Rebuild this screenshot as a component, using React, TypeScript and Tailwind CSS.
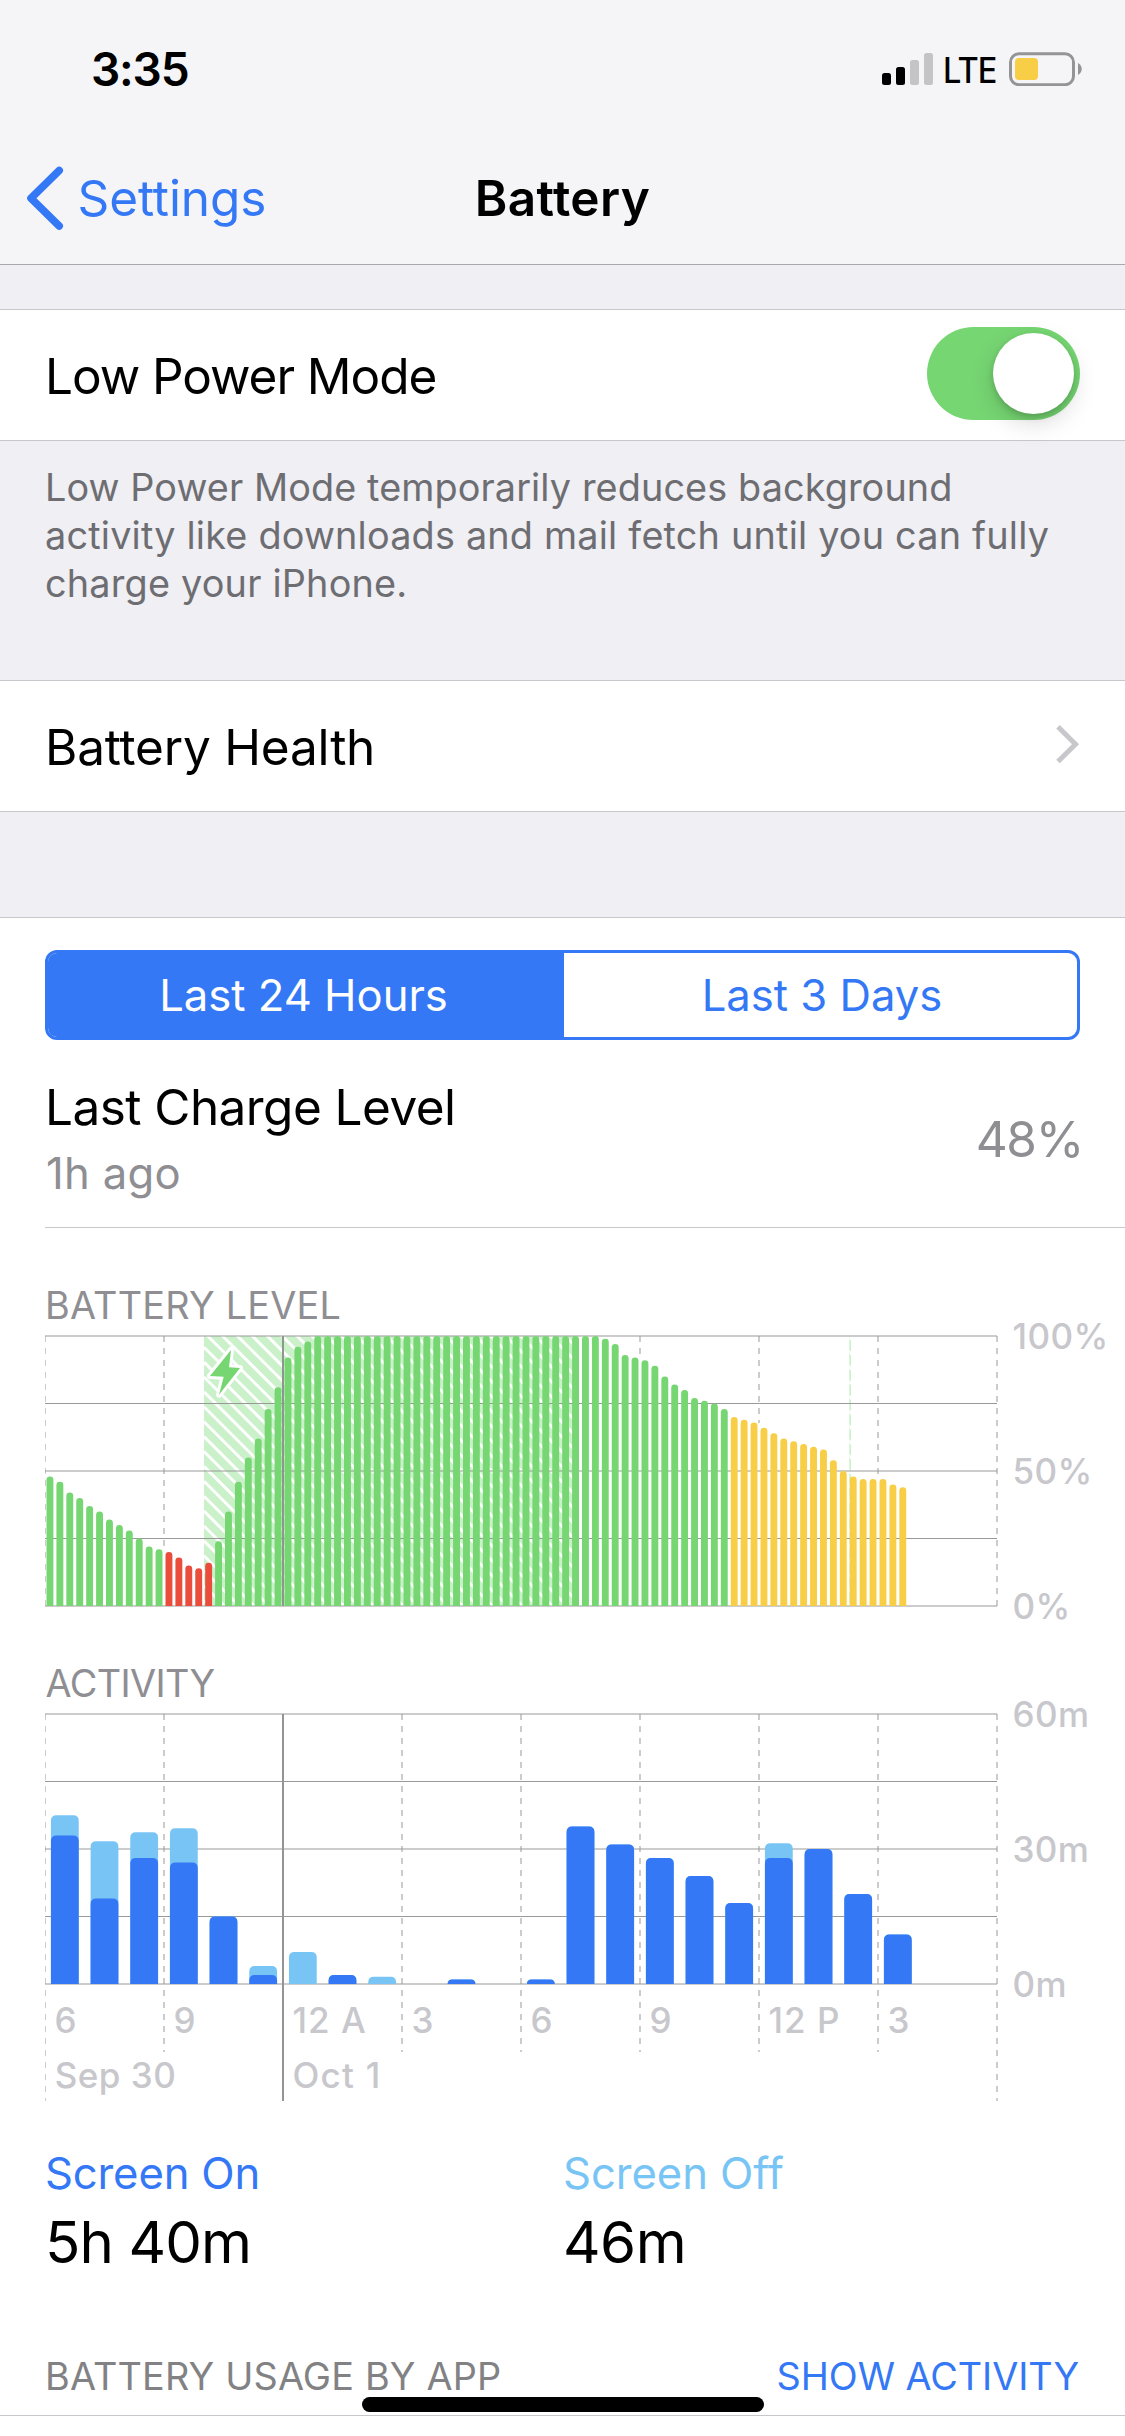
import React, { useState } from 'react';

type Tab = 'day' | 'days';
type ActivityHour = { on: number; total: number };

// battery percent, one sample every 15 minutes
const levels = [
  48, 46, 42, 40, 37, 35, 32, 30, 28, 25, 22, 21,
  20, 18, 15, 14, 16,
  24, 35, 46, 55, 62, 73, 81, 92, 96, 98,
  ...Array(29).fill(100),
  99, 97, 93, 92, 91, 89, 85, 82, 80, 77, 76, 75, 73,
  70, 69, 68, 66, 64, 62, 61, 60, 59, 58, 54, 50, 48, 47, 47, 47, 45, 44,
];

// minutes per hour
const activity: ActivityHour[] = [
  { on: 33, total: 37.5 },
  { on: 19, total: 31.7 },
  { on: 28, total: 33.7 },
  { on: 27, total: 34.6 },
  { on: 15, total: 15 },
  { on: 2, total: 4 },
  { on: 0, total: 7.1 },
  { on: 2, total: 2 },
  { on: 0, total: 1.6 },
  { on: 0, total: 0 },
  { on: 1, total: 1 },
  { on: 0, total: 0 },
  { on: 1, total: 1 },
  { on: 35, total: 35 },
  { on: 31, total: 31 },
  { on: 28, total: 28 },
  { on: 24, total: 24 },
  { on: 18, total: 18 },
  { on: 28, total: 31.3 },
  { on: 30, total: 30 },
  { on: 20, total: 20 },
  { on: 11, total: 11 },
];

const hours = ['6', '9', '12 A', '3', '6', '9', '12 P', '3'];

const LEFT = 45;
const RIGHT = 997;
const TOP = 28;
const BOTTOM = 298;
const STEP = 119;

const levelColor = (i: number) => {
  if (i >= 12 && i <= 16) return '#eb4d3d';
  if (i >= 69) return '#f8ce46';
  return '#76d672';
};

const barPath = (cx: number, width: number, height: number, radius: number) => {
  const r = Math.min(radius, height);
  const x = cx - width / 2;
  const y = BOTTOM - height;
  return `M${x} ${BOTTOM}V${y + r}Q${x} ${y} ${x + r} ${y}H${x + width - r}Q${x + width} ${y} ${x + width} ${y + r}V${BOTTOM}Z`;
};

const GridRows: React.FC = () => (
  <g stroke="#999999">
    {[0, 1, 2, 3, 4].map(n => (
      <line key={n} x1={LEFT} x2={RIGHT} y1={TOP + n * 67.5} y2={TOP + n * 67.5} />
    ))}
  </g>
);

const ScaleLabels: React.FC<{ labels: string[] }> = ({ labels }) => (
  <g className="fill-[#c7c7cc] text-[35px] font-medium tracking-[0.4px]">
    {labels.map((label, n) => (
      <text key={label} x={1012.5} y={TOP + 12.6 + n * 135}>{label}</text>
    ))}
  </g>
);

const BatteryLevelChart: React.FC = () => {
  // dashed lines stop where the bars begin
  const dashes = [
    [0, BOTTOM], [1, 238], [5, 46], [6, 115], [7, 166], [8, BOTTOM],
  ];

  return (
    <svg width="1125" height="352" viewBox="0 0 1125 352" className="-mt-5 block">
      <defs>
        <clipPath id="charging">
          <rect x="204" y={TOP} width="371" height="270" />
          <rect x="849.3" y={TOP} width="1.7" height="270" />
        </clipPath>
        <clipPath id="level-plot">
          <rect x={LEFT} y="0" width="960" height="352" />
        </clipPath>
      </defs>
      <g clipPath="url(#charging)">
        <rect x="204" y={TOP} width="700" height="270" fill="#cbf1cb" />
        {Array.from({ length: 68 }, (_, n) => {
          const y = 39.2 + (n - 48) * 14.9;
          return <line key={n} x1="204" y1={y} x2="904" y2={y + 700} stroke="#fff" strokeWidth="2.9" />;
        })}
      </g>
      <GridRows />
      <g stroke="#999999" strokeDasharray="6 6" clipPath="url(#level-plot)">
        {dashes.map(([n, end]) => (
          <line key={n} x1={LEFT + n * STEP} x2={LEFT + n * STEP} y1={TOP} y2={end} />
        ))}
      </g>
      <line x1="283" x2="283" y1={TOP} y2={BOTTOM} stroke="#8f9590" strokeWidth="2" />
      {levels.map((level, i) => (
        <path key={i} d={barPath(LEFT + (i + 0.5) * (952 / 96), 6.9, level * 2.7, 3.4)} fill={levelColor(i)} />
      ))}
      <path
        d="M231 42L229 59.3L240 60L219 86.7L223.7 68.7L210 68Z"
        fill="#76d672"
        stroke="#fff"
        strokeWidth="6"
        strokeLinejoin="round"
        paintOrder="stroke"
      />
      <ScaleLabels labels={['100%', '50%', '0%']} />
    </svg>
  );
};

const ActivityChart: React.FC = () => (
  <svg width="1125" height="420" viewBox="0 0 1125 420" className="-mt-5 block">
    <defs>
      <clipPath id="activity-plot">
        <rect x={LEFT} y="0" width="960" height="420" />
      </clipPath>
    </defs>
    <GridRows />
    <g stroke="#999999" strokeDasharray="6 6" clipPath="url(#activity-plot)">
      {[0, 1, 2, 3, 4, 5, 6, 7, 8].map(n => (
        <line
          key={n}
          x1={LEFT + n * STEP}
          x2={LEFT + n * STEP}
          y1={TOP}
          y2={n === 0 || n === 8 ? 415 : 366}
        />
      ))}
    </g>
    <line x1="283" x2="283" y1={TOP} y2="415" stroke="#949494" strokeWidth="2" />
    {activity.map(({ on, total }, i) => {
      const cx = LEFT + (i + 0.5) * (952 / 24);
      return (
        <g key={i}>
          {total > 0 && <path d={barPath(cx, 27.8, total * 4.5, 5.5)} fill="#78c5f5" />}
          {on > 0 && <path d={barPath(cx, 27.8, on * 4.5, 5.5)} fill="#3478f6" />}
        </g>
      );
    })}
    <ScaleLabels labels={['60m', '30m', '0m']} />
    <g className="fill-[#c7c7cc] text-[35px] font-medium tracking-[1px]">
      {hours.map((hour, n) => (
        <text key={n} x={LEFT + 9.5 + n * STEP} y="347">{hour}</text>
      ))}
      <text x="54.7" y="401.7" className="tracking-[0.5px]">Sep 30</text>
      <text x="292.4" y="401.7" className="tracking-[1.3px]">Oct 1</text>
    </g>
  </svg>
);

const StatusBar: React.FC = () => (
  <div className="flex h-[132px] items-start justify-between pl-[91px] pr-[43px] pt-10">
    <span className="pt-px text-[46px] leading-[56px] font-semibold tracking-[-1.17px]">3:35</span>
    <div className="flex items-start pt-3">
      <svg width="51" height="34" viewBox="0 0 51 34" className="mt-px">
        <rect x="0" y="20" width="9" height="12" rx="2.5" fill="#000" />
        <rect x="14" y="14" width="9" height="18" rx="2.5" fill="#000" />
        <rect x="28" y="7" width="9" height="25" rx="2.5" fill="#c4c4c6" />
        <rect x="42" y="0" width="9" height="32" rx="2.5" fill="#c4c4c6" />
      </svg>
      <span className="ml-[9.5px] w-[66.5px] origin-left scale-x-[0.93] text-[35px] leading-9 font-medium tracking-[-1px]">LTE</span>
      <svg width="73" height="34" viewBox="0 0 73 34">
        <rect x="1.5" y="1.7" width="63" height="31" rx="8.5" fill="none" stroke="#949496" strokeWidth="3" />
        <rect x="6" y="6" width="23" height="22" rx="4" fill="#f8ce46" />
        <path d="M69 11C74 14 74 20 69 23Z" fill="#949496" />
      </svg>
    </div>
  </div>
);

const NavBar: React.FC = () => (
  <div className="grid h-[132px] grid-cols-3 items-center text-[49.5px] leading-[60px]">
    <button className="flex items-center pl-6 text-[#3478f6]">
      <svg width="42" height="66" viewBox="0 0 42 66" fill="none">
        <path d="M35.2 5.5L7 33.3L35.2 61" stroke="#3478f6" strokeWidth="7.6" strokeLinecap="round" strokeLinejoin="round" />
      </svg>
      <span className="ml-[11.5px] tracking-[-0.1px]">Settings</span>
    </button>
    <h1 className="text-center font-semibold tracking-[0.4px]">Battery</h1>
  </div>
);

const App: React.FC = () => {
  const [lowPower, setLowPower] = useState(true);
  const [tab, setTab] = useState<Tab>('day');

  return (
    <div className="relative h-[2436px] w-[1125px] overflow-hidden bg-[#efeff4] font-[Inter,'Liberation_Sans',sans-serif] text-black">
      <header className="h-[265px] border-b border-[#a9a9ad] bg-[#f5f5f7]">
        <StatusBar />
        <NavBar />
      </header>

      <div className="mt-11 flex h-[132px] items-center justify-between border-y border-[#c8c7cc] bg-white px-[45px]">
        <span className="pt-0.5 text-[49.5px] leading-[60px] tracking-[-1.05px]">Low Power Mode</span>
        <button
          onClick={() => setLowPower(!lowPower)}
          className={`mb-[3px] flex h-[93px] w-[153px] items-center rounded-full px-1.5 ${lowPower ? 'justify-end bg-[#76d672]' : 'justify-start bg-[#e5e5ea]'}`}
        >
          <span className="size-[81px] rounded-full bg-white shadow-[0_9px_24px_rgba(0,0,0,0.15),0_3px_6px_rgba(0,0,0,0.16)]" />
        </button>
      </div>
      <p className="h-[239px] pl-[45px] pt-[22px] text-[37.8px] leading-[48px] tracking-[0.2px] text-[#6d6d72]">
        <span className="tracking-[0.1px]">Low Power Mode temporarily reduces background</span><br />
        activity like downloads and mail fetch until you can fully<br />
        charge your iPhone.
      </p>

      <div className="flex h-[132px] items-center justify-between border-y border-[#c8c7cc] bg-white px-[45px]">
        <span className="pt-0.5 text-[49.5px] leading-[60px] tracking-[-0.2px]">Battery Health</span>
        <svg width="24" height="40" viewBox="0 0 24 40" fill="none" className="mb-1">
          <path d="M2 2.8L19.5 20.2L2 37.6" stroke="#c7c7cc" strokeWidth="5" />
        </svg>
      </div>

      <section className="mt-[105px] h-[1498px] border-t border-[#c8c7cc] bg-white pt-8">
        <div className="mx-[45px] flex h-[90px] overflow-hidden rounded-[12px] border-[3px] border-[#3478f6] text-[43.6px] leading-[52px]">
          <button
            onClick={() => setTab('day')}
            className={`w-[516px] pr-[5px] pt-px ${tab === 'day' ? 'bg-[#3478f6] text-white' : 'text-[#3478f6]'}`}
          >
            Last 24 Hours
          </button>
          <button
            onClick={() => setTab('days')}
            className={`flex-1 pl-[3px] pt-px ${tab === 'days' ? 'bg-[#3478f6] text-white' : 'text-[#3478f6]'}`}
          >
            Last 3 Days
          </button>
        </div>

        <div className="ml-[45px] flex h-[188px] justify-between border-b border-[#c8c7cc] pr-[42px]">
          <div className="flex flex-col pt-[37px]">
            <span className="text-[49.5px] leading-[60px] tracking-[-0.55px]">Last Charge Level</span>
            <span className="mt-[11px] pl-px text-[43.6px] leading-[52px] tracking-[0.3px] text-[#8e8e93]">1h ago</span>
          </div>
          <span className="pt-[69px] text-[49.5px] leading-[60px] tracking-[-1.3px] text-[#8e8e93]">48%</span>
        </div>

        <h2 className="mt-[54px] pl-[45px] text-[37.8px] leading-[46px] tracking-[0.24px] text-[#8e8e93]">BATTERY LEVEL</h2>
        <BatteryLevelChart />
        <h2 className="pl-[45.5px] text-[37.8px] leading-[46px] tracking-[-0.6px] text-[#8e8e93]">ACTIVITY</h2>
        <ActivityChart />

        <div className="mt-[42px] flex pl-[45px]">
          <div className="flex w-[518px] flex-col">
            <span className="text-[43.6px] leading-[52px] tracking-[-0.15px] text-[#3478f6]">Screen On</span>
            <span className="mt-[7px] text-[58.2px] leading-[70px] tracking-[-0.9px]">5h 40m</span>
          </div>
          <div className="flex flex-col">
            <span className="text-[43.6px] leading-[52px] tracking-[-0.05px] text-[#78c5f5]">Screen Off</span>
            <span className="mt-[7px] text-[58.2px] leading-[70px] tracking-[-0.5px]">46m</span>
          </div>
        </div>

        <div className="mt-[76px] flex justify-between pl-[45px] pr-[46px] text-[37.8px] leading-[46px]">
          <span className="tracking-[0.17px] text-[#828284]">BATTERY USAGE BY APP</span>
          <button className="tracking-[-0.05px] text-[#3478f6]">SHOW ACTIVITY</button>
        </div>
      </section>
      <div className="h-[21px] border-t border-[#c8c7cc] bg-white" />

      {/* home indicator */}
      <div className="absolute bottom-6 left-[362px] h-[15px] w-[402px] rounded-full bg-black" />
    </div>
  );
};

export default App;
